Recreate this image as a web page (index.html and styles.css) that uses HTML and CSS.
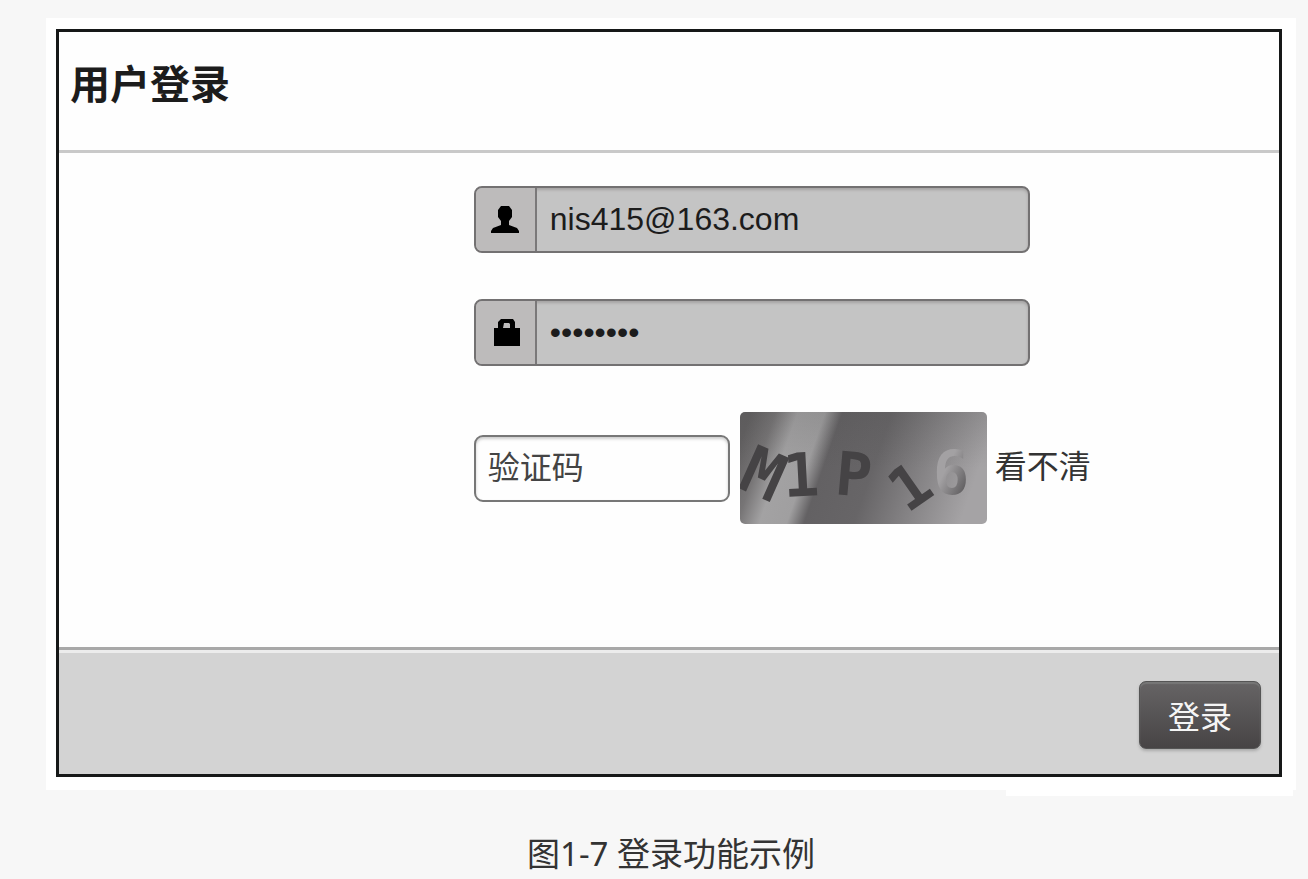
FILE: index.html
```html
<!DOCTYPE html>
<html lang="zh-CN">
<head>
<meta charset="utf-8">
<meta name="viewport" content="width=device-width, initial-scale=1">
<title>用户登录</title>
<link rel="stylesheet" href="styles.css">
</head>
<body>
<figure class="figure">
  <div class="frame">
    <form class="login">
      <header class="login-header"><h1 class="login-title">用户登录</h1></header>
      <div class="login-body">
        <div class="field">
          <label class="field-icon" for="email" aria-label="邮箱">
            <svg width="28" height="28" viewBox="0 0 28 28" aria-hidden="true"><path d="M10 0h8l3 4v7l-3 4v4l8 3 2 3v2H0v-2l2-3 8-3v-4l-3-4V4z"/></svg>
          </label>
          <input class="field-input" id="email" type="text" value="nis415@163.com">
        </div>
        <div class="field">
          <label class="field-icon field-icon-lock" for="password" aria-label="密码">
            <svg width="26" height="28" viewBox="0 0 26 28" aria-hidden="true"><path fill-rule="evenodd" d="M0 9h4V3l3-3h12l2 3v6h5v18H0zM10 4L9 9h7V5l-1-1z"/></svg>
          </label>
          <input class="field-input" id="password" type="password" value="abcd1234">
        </div>
        <div class="captcha-row">
          <input class="captcha-input" type="text" placeholder="验证码" aria-label="验证码">
          <svg class="captcha" width="247" height="112" viewBox="0 0 247 112" role="img" aria-label="验证码图片">
            <defs>
              <linearGradient id="streak" gradientUnits="userSpaceOnUse" x1="4" y1="20" x2="225" y2="97">
                <stop offset="0" stop-color="#626061"/>
                <stop offset=".1" stop-color="#777576"/>
                <stop offset=".19" stop-color="#a3a2a3"/>
                <stop offset=".3" stop-color="#a09fa0"/>
                <stop offset=".37" stop-color="#636163"/>
                <stop offset=".57" stop-color="#676567"/>
                <stop offset=".77" stop-color="#848284"/>
                <stop offset="1" stop-color="#a5a3a5"/>
              </linearGradient>
              <linearGradient id="shade" x1="0" y1="0" x2="0" y2="1">
                <stop offset="0" stop-color="#444" stop-opacity=".15"/>
                <stop offset=".5" stop-color="#444" stop-opacity="0"/>
              </linearGradient>
              <linearGradient id="six" x1="0" y1="0" x2="1" y2="1">
                <stop offset=".4" stop-color="#a3a1a3"/>
                <stop offset=".85" stop-color="#5a585a"/>
              </linearGradient>
            </defs>
            <rect width="247" height="112" fill="url(#streak)"/>
            <rect width="247" height="112" fill="url(#shade)"/>
            <g class="captcha-text">
              <text class="captcha-m" transform="translate(-4 75) rotate(24)">M</text>
              <text transform="translate(44 85) rotate(-3)">1</text>
              <text transform="translate(94 82) rotate(5)">P</text>
              <text transform="translate(167 102) rotate(-35)">1</text>
              <text transform="translate(193 82)" fill="url(#six)">6</text>
            </g>
          </svg>
          <button class="refresh" type="button">看不清</button>
        </div>
      </div>
      <footer class="login-footer"><button class="submit" type="submit">登录</button></footer>
    </form>
  </div>
  <figcaption class="caption">图1-7 登录功能示例</figcaption>
</figure>
</body>
</html>
```
FILE: styles.css
```css
* { box-sizing: border-box; }

body {
  margin: 0;
  background: #f7f7f7;
  color: #333;
  font-family: "Liberation Sans", "Noto Sans CJK SC", sans-serif;
  font-size: 32px;
}

.figure { margin: 18px 12px 0 46px; }

.frame {
  position: relative;
  padding: 11px 14px 13px 10px;
  background: #fff;
}

/* Lower edge strip of the paper at the right. */
.frame::after {
  content: "";
  position: absolute;
  right: 3px;
  bottom: -6px;
  width: 23%;
  height: 6px;
  background: #fff;
}

.login {
  border: 3px solid #161818;
  background: #fefefe;
}

.login-header {
  padding: 23px 11px 35px;
  border-bottom: 3px solid #c9c9c9;
}

.login-title {
  margin: 0;
  color: #1c1c1c;
  font-size: 40px;
  line-height: 60px;
}

.login-body {
  display: flex;
  flex-direction: column;
  gap: 46px;
  padding: 33px 0 123px 34%;
}

.field {
  display: flex;
  width: 100%;
  max-width: 556px;
  height: 67px;
  border: 2px solid #737172;
  border-radius: 8px;
  background: #c4c4c4;
  box-shadow: inset 0 2px 3px #a5a3a3;
  overflow: hidden;
}

.field-icon {
  display: flex;
  flex: none;
  align-items: center;
  justify-content: center;
  width: 61px;
  border-right: 2px solid #7a7879;
  background: #bdbbbb;
}

.field-icon-lock { padding-left: 3px; }

.field-input,
.captcha-input {
  min-width: 0;
  font: inherit;
  outline: 0;
}

.field-input {
  flex: 1;
  padding: 0 13px;
  border: 0;
  background: transparent;
  color: #1c1c1c;
}

.captcha-row {
  display: flex;
  align-items: center;
}

.captcha-input {
  width: 256px;
  height: 67px;
  margin-right: 10px;
  padding: 0 12px;
  border: 2px solid #777;
  border-radius: 9px;
  background: #fefefe;
  box-shadow: inset 0 2px 3px #ccc;
  color: #444;
}

.captcha-input::placeholder { color: #444; opacity: 1; }

.captcha {
  flex: none;
  border-radius: 5px;
}

.captcha-text {
  fill: #454345;
  font-family: "DejaVu Sans Mono", monospace;
  font-size: 60px;
  font-weight: 700;
}

.captcha-m { font-size: 66px; }

.refresh {
  margin-left: 8px;
  padding: 0 0 8px;
  border: 0;
  background: none;
  color: #333;
  font: inherit;
  white-space: nowrap;
}

.login-footer {
  display: flex;
  justify-content: flex-end;
  padding: 31px 18px 25px;
  border-top: 3px solid #a8a8a8;
  background: #d3d3d3;
  box-shadow: inset 0 3px #ececec;
}

.submit {
  width: 122px;
  height: 68px;
  padding: 0;
  border: 1px solid #555;
  border-radius: 7px;
  background: linear-gradient(#666465, #474445);
  box-shadow: 0 2px 3px #aaa, inset 0 2px 1px #777;
  color: #f5f5f5;
  font: inherit;
}

.caption {
  padding: 40px 0 0;
  font-family: "Noto Sans", "Noto Sans CJK SC", sans-serif;
  font-size: 33px;
  line-height: 48px;
  text-align: center;
}
```
